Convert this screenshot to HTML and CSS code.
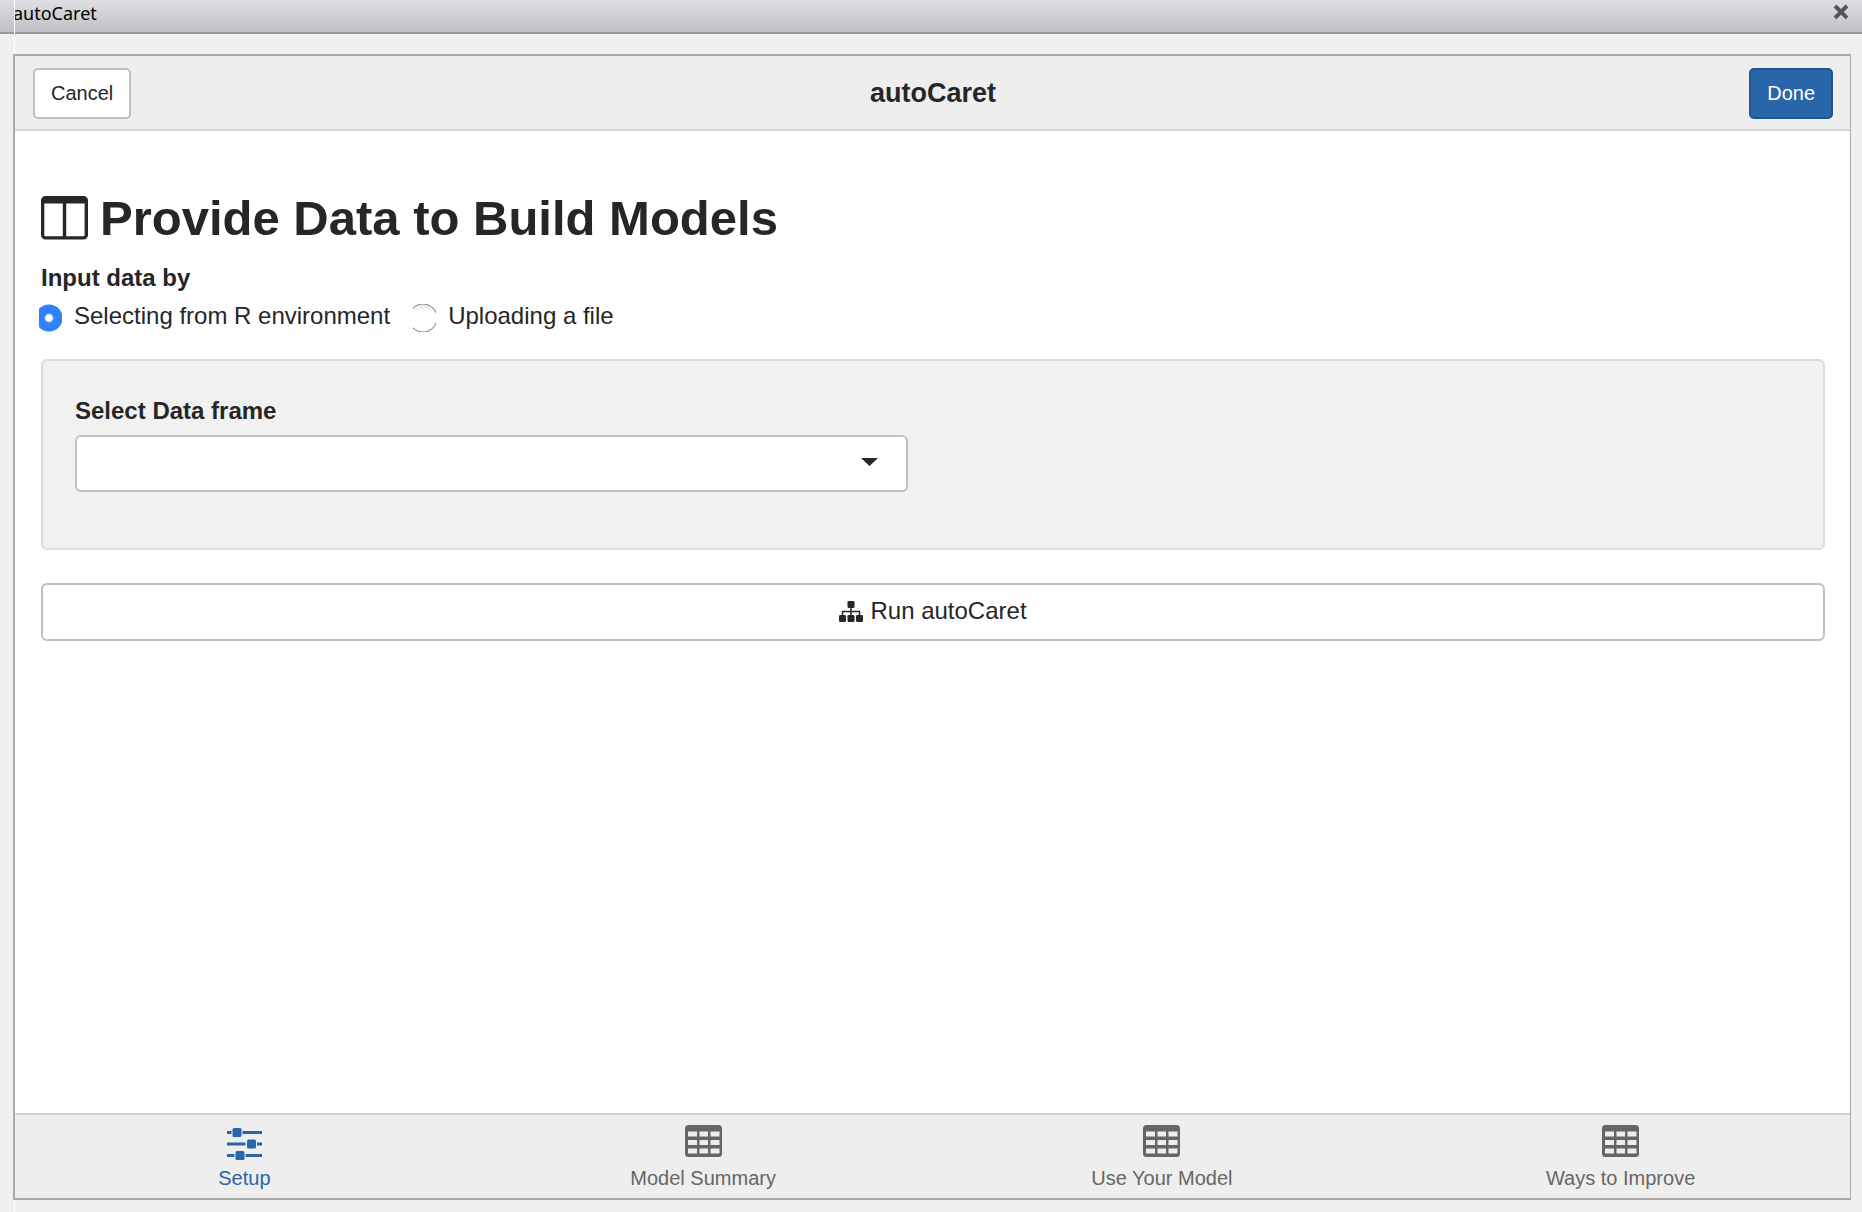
FILE: index.html
```html
<!DOCTYPE html>
<html lang="en">
<head>
<meta charset="utf-8">
<title>autoCaret</title>
<link rel="stylesheet" href="styles.css">
</head>
<body>
<svg width="0" height="0" class="sprite" aria-hidden="true">
  <symbol id="icon-table" viewBox="0 0 37 32">
    <path fill-rule="evenodd" d="M3.500 0H33.500A3.500 3.500 0 0 1 37 3.500V28.500A3.500 3.500 0 0 1 33.500 32H3.500A3.500 3.500 0 0 1 0 28.500V3.500A3.500 3.500 0 0 1 3.500 0ZM3 6.500V11.500H12V6.500ZM14.500 6.500V11.500H23V6.500ZM25.500 6.500V11.500H34.500V6.500ZM3 15V20H12V15ZM14.500 15V20H23V15ZM25.500 15V20H34.500V15ZM3 23.500V28.500H12V23.500ZM14.500 23.500V28.500H23V23.500ZM25.500 23.500V28.500H34.500V23.500Z"/>
  </symbol>
</svg>
<div class="titlebar">
  <span class="titlebar-text">autoCaret</span>
  <button class="close" type="button" aria-label="Close">
    <svg width="16" height="16" viewBox="0 0 16 16"><path d="M2.500 3.500L13.500 14.500M13.500 3.500L2.500 14.500" stroke="#f4f4f6" stroke-width="4"/><path d="M2 2L14 14M14 2L2 14" stroke="#555" stroke-width="4"/></svg>
  </button>
</div>
<div class="gadget">
  <header class="gadget-head">
    <button class="btn" type="button">Cancel</button>
    <h1 class="gadget-title">autoCaret</h1>
    <button class="btn btn-primary" type="button">Done</button>
  </header>
  <main class="content">
    <h2 class="page-title">
      <svg width="47" height="44" viewBox="0 0 47 44" aria-hidden="true"><path fill-rule="evenodd" d="M4.500 0H42.500A4.500 4.500 0 0 1 47 4.500V39A4.500 4.500 0 0 1 42.500 43.500H4.500A4.500 4.500 0 0 1 0 39V4.500A4.500 4.500 0 0 1 4.500 0ZM3.300 7.500V39Q3.300 40.300 4.600 40.300H21.800V7.500ZM25.200 7.500V40.300H42.300Q43.600 40.300 43.600 39V7.500Z"/></svg>
      Provide Data to Build Models
    </h2>
    <fieldset class="source">
      <legend class="label">Input data by</legend>
      <label class="choice"><input type="radio" name="source" checked><span>Selecting from R environment</span></label>
      <label class="choice"><input type="radio" name="source"><span>Uploading a file</span></label>
    </fieldset>
    <section class="well">
      <label class="label" for="frame">Select Data frame</label>
      <div class="select-box">
        <select id="frame"><option value=""></option></select>
        <svg class="caret" width="17" height="8" viewBox="0 0 17 8" aria-hidden="true"><path d="M0 0H17L8.500 8Z"/></svg>
      </div>
    </section>
    <button class="run" type="button">
      <svg width="24" height="21" viewBox="0 0 24 21" aria-hidden="true"><path d="M12 6V14M3.500 14V10.500H20.500V14" fill="none" stroke="currentColor" stroke-width="1.500"/><rect x="8.500" width="7" height="7" rx="1.300"/><rect y="14" width="7" height="7" rx="1.300"/><rect x="8.500" y="14" width="7" height="7" rx="1.300"/><rect x="17" y="14" width="7" height="7" rx="1.300"/></svg>
      Run autoCaret
    </button>
  </main>
  <nav class="tabs">
    <a class="tab active" href="#setup">
      <svg width="35" height="32" viewBox="0 0 35 32" aria-hidden="true"><path d="M0 6H4.500V9H0ZM15.500 6H35V9H15.500ZM0 17.500H18.500V20.500H0ZM30 17.500H35V20.500H30ZM0 29H7.500V32H0ZM18.500 29H35V32H18.500Z"/><rect x="5.500" y="3" width="9" height="9" rx="1.500"/><rect x="20" y="14.500" width="9" height="9" rx="1.500"/><rect x="8.500" y="26" width="9" height="9" rx="1.500"/></svg>
      <span>Setup</span>
    </a>
    <a class="tab" href="#summary"><svg width="37" height="32" aria-hidden="true"><use href="#icon-table"/></svg><span>Model Summary</span></a>
    <a class="tab" href="#use"><svg width="37" height="32" aria-hidden="true"><use href="#icon-table"/></svg><span>Use Your Model</span></a>
    <a class="tab" href="#improve"><svg width="37" height="32" aria-hidden="true"><use href="#icon-table"/></svg><span>Ways to Improve</span></a>
  </nav>
</div>
</body>
</html>
```
FILE: styles.css
```css
* { box-sizing: border-box; }

body {
  position: relative;
  display: flex;
  flex-direction: column;
  min-height: 100vh;
  margin: 0;
  background: #eff1f1;
  color: #262626;
  font: 24px/34px "Liberation Sans", Arial, sans-serif;
}

/* Thin light edge running behind the panel */
body::before,
body::after {
  content: "";
  position: absolute;
  left: 14px;
  width: 1px;
  background: #fff;
}
body::before { top: 0; height: 54px; }
body::after { bottom: 0; height: 12px; }

.sprite { position: absolute; }
svg { display: block; flex: none; fill: currentColor; }
button, select { font: inherit; color: inherit; }

.titlebar {
  display: flex;
  align-items: center;
  justify-content: space-between;
  height: 34px;
  padding: 0 13px 6px;
  border-bottom: 2px solid #98979e;
  background: linear-gradient(#dedee3, #bfbfc4);
  color: #000;
  font: 18px/26px "Noto Sans", sans-serif;
}
.close { padding: 0; border: 0; background: none; }
.close svg { margin-bottom: 2px; }

.gadget {
  display: flex;
  flex: 1;
  flex-direction: column;
  margin: 20px 11px 12px 13px;
  border: 2px solid #aaa;
  border-right-width: 1px;
  background: #fff;
}

.gadget-head {
  display: grid;
  grid-template-columns: 1fr auto 1fr;
  align-items: center;
  padding: 12px 17px 10px 18px;
  border-bottom: 2px solid #d2d2d2;
  background: #eee;
}
.gadget-title { margin: 0; padding-bottom: 2px; font-size: 27px; line-height: 34px; }

.btn {
  justify-self: start;
  padding: 8px 16px 9px;
  border: 2px solid #c0c0c0;
  border-radius: 5px;
  background: #fff;
  font-size: 20px;
  line-height: 30px;
}
.btn-primary { justify-self: end; border-color: #1f5596; background: #2865a9; color: #fff; }

.content { flex: 1; padding: 57px 25px 24px 26px; }

.page-title {
  display: flex;
  align-items: center;
  gap: 12px;
  margin: 0;
  font-size: 49px;
  line-height: 60px;
}

.source {
  display: flex;
  flex-wrap: wrap;
  gap: 25px;
  margin: 13px 0 26px;
  padding: 0;
  border: 0;
}
.label { display: block; padding: 0; font-weight: bold; }
.source .label { margin-bottom: 4px; }

/* Radio discs are wider than their box, so their sides are cut flat */
.choice { display: flex; align-items: center; gap: 12px; }
.choice input {
  appearance: none;
  width: 23px;
  height: 28px;
  margin: 4px 0 0 -2px;
  background:
    radial-gradient(circle at 10px 14px, transparent 13px, #888 14px, #fff 15px),
    linear-gradient(#e4e4e4, #fff 8px);
}
.choice input:checked {
  background: radial-gradient(circle at 10px 14px, #fff 3px, #2f82fb 5px, #2f82fb 13px, transparent 14px);
}

.well {
  min-height: 191px;
  padding: 33px 32px 31px;
  border: 2px solid #dcdcdc;
  border-radius: 6px;
  background: #f1f1f1;
}
.well .label { margin-bottom: 7px; }

.select-box {
  display: grid;
  width: calc(50% - 25px);
  align-items: center;
}
.select-box select {
  grid-area: 1 / 1;
  width: 100%;
  height: 57px;
  padding: 0 48px 0 20px;
  appearance: none;
  border: 2px solid #c0c0c0;
  border-radius: 6px;
  background: #fff;
}
.caret {
  grid-area: 1 / 1;
  justify-self: end;
  margin: 0 30px 4px 0;
  pointer-events: none;
}

.run {
  display: flex;
  align-items: center;
  justify-content: center;
  gap: 7px;
  width: 100%;
  margin-top: 33px;
  padding: 9px 24px 11px;
  border: 2px solid #c0c0c0;
  border-radius: 6px;
  background: #fff;
}

.tabs {
  display: grid;
  grid-template-columns: repeat(4, 1fr);
  border-top: 2px solid #d2d2d2;
  background: #eee;
}
.tab {
  display: flex;
  flex-direction: column;
  align-items: center;
  gap: 6px;
  padding: 10px 8px 5px;
  color: #666;
  font-size: 20px;
  line-height: 30px;
  text-decoration: none;
}
.tab.active { color: #2865a9; }
.tab.active svg { overflow: visible; }
```
